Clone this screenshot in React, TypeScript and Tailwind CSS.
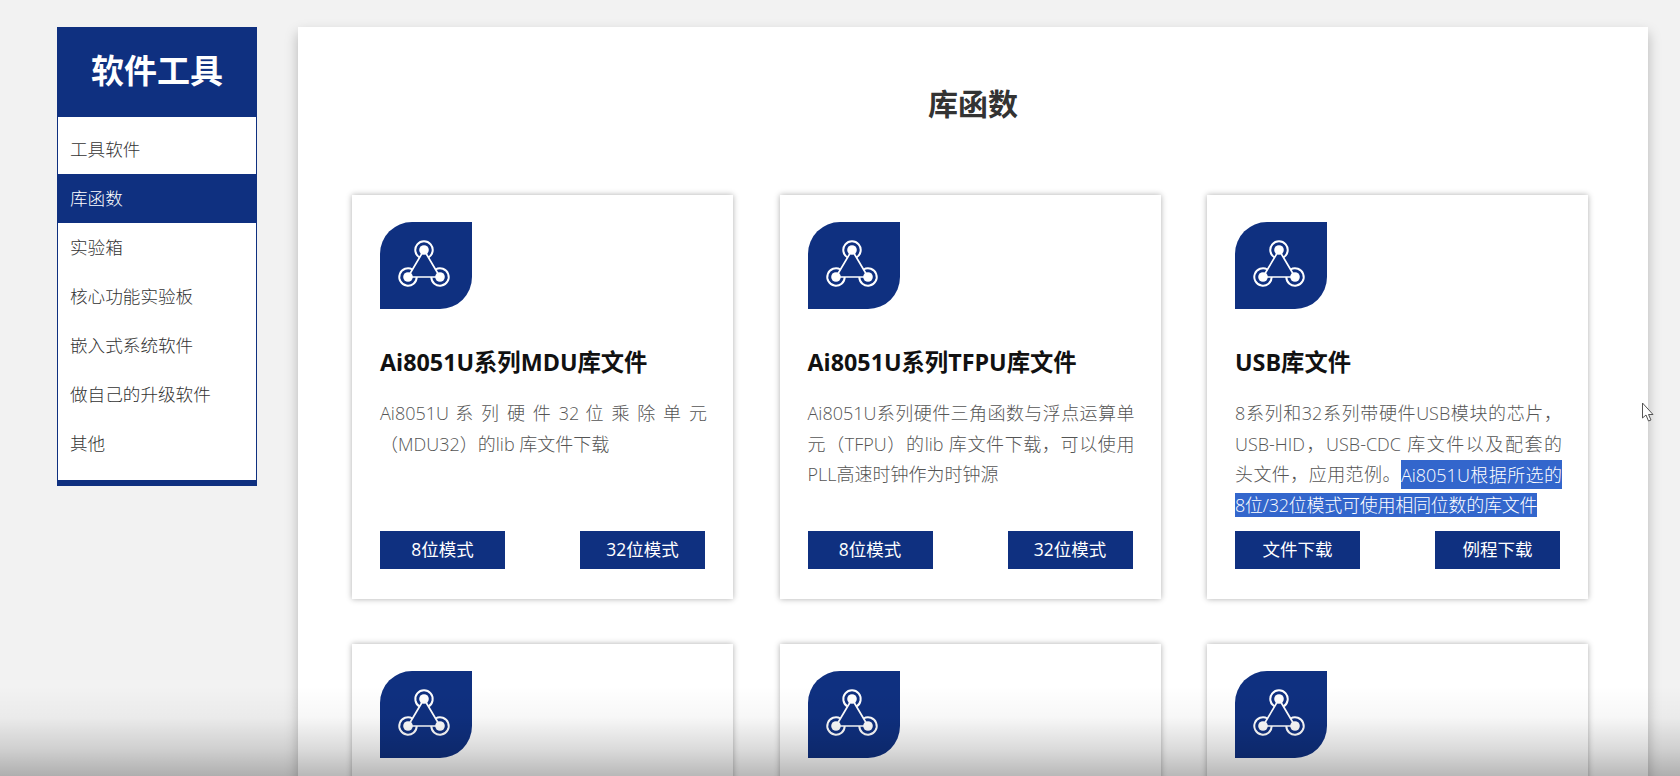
import React from "react";

const navs = ["工具软件", "库函数", "实验箱", "核心功能实验板", "嵌入式系统软件", "做自己的升级软件", "其他"];

function NetIcon() {
  return (
    <div className="w-[92px] h-[87px] bg-[#0f3080] rounded-tl-[32px] rounded-br-[32px] shrink-0">
      <svg width="92" height="87" viewBox="0 0 92 87" fill="none" stroke="#fff">
        <path d="M44 28 L28 55 L60 55 Z" strokeWidth="1.7" strokeLinejoin="round" />
        <path d="M39.6 35.5 A8.7 8.7 0 1 1 48.4 35.5" strokeWidth="2" />
        <path d="M32.4 47.5 A8.7 8.7 0 1 0 36.7 55" strokeWidth="2" />
        <path d="M55.6 47.5 A8.7 8.7 0 1 1 51.3 55" strokeWidth="2" />
        <circle cx="44" cy="28" r="4.8" fill="#fff" stroke="none" />
        <circle cx="28" cy="55" r="4.8" fill="#fff" stroke="none" />
        <circle cx="60" cy="55" r="4.8" fill="#fff" stroke="none" />
      </svg>
    </div>
  );
}

function Btn({ children }: { children: React.ReactNode }) {
  return (
    <div className="w-[125px] h-[38px] bg-[#0f3080] text-white text-[17.5px] leading-[37px] text-center">{children}</div>
  );
}

function Line({ children, last }: { children: React.ReactNode; last?: boolean }) {
  return (
    <div className={last ? "h-[30.5px] leading-[30.5px] whitespace-nowrap" : "h-[30.5px] leading-[30.5px] text-justify [text-align-last:justify]"}>
      {children}
    </div>
  );
}

function Card({
  title,
  lines,
  buttons,
}: {
  title: string;
  lines?: React.ReactNode;
  buttons?: [string, string];
}) {
  return (
    <div className="h-[404px] bg-white shadow-[0_0_6px_rgba(0,0,0,0.32)] pt-[27px] px-[28px] pb-[30px] flex flex-col">
      <NetIcon />
      {title && <h3 className="mt-[37px] text-[23.3px] leading-[32px] font-bold text-[#111] whitespace-nowrap">{title}</h3>}
      {lines && <div className="mt-[20px] -mr-[2px] text-[18px] font-light text-[#555]">{lines}</div>}
      {buttons && (
        <div className="mt-auto flex justify-between w-[325px]">
          <Btn>{buttons[0]}</Btn>
          <Btn>{buttons[1]}</Btn>
        </div>
      )}
    </div>
  );
}

export default function App() {
  return (
    <div className="relative h-[776px] overflow-hidden bg-[#f2f2f2] font-['Open_Sans','Noto_Sans_CJK_SC',sans-serif]">
      <div className="flex items-start pt-[27px] pl-[57px]">
        <aside className="w-[200px] shrink-0 border-x border-b-[6px] border-[#0f3080] bg-white">
          <div className="-mx-px h-[90px] bg-[#0f3080] text-white text-[33px] font-bold leading-[87px] text-center">软件工具</div>
          <ul className="pt-[8px] pb-[12px]">
            {navs.map((n, i) => (
              <li
                key={n}
                className={
                  i === 1
                    ? "h-[49px] leading-[49px] pl-[12px] text-[17.6px] font-light bg-[#0f3080] text-white"
                    : "h-[49px] leading-[49px] pl-[12px] text-[17.6px] font-light text-[#333]"
                }
              >
                {n}
              </li>
            ))}
          </ul>
        </aside>
        <main className="ml-[41px] w-[1350px] shrink-0 h-[900px] bg-white shadow-[0_6px_12px_rgba(0,0,0,0.25)] pl-[54px] pr-[60px]">
          <h2 className="h-[168px] pt-[53px] pl-[6px] text-[30px] leading-[48px] font-bold text-[#333] text-center">库函数</h2>
          <div className="grid grid-cols-3 gap-x-[46.5px] gap-y-[45px]">
            <Card
              title="Ai8051U系列MDU库文件"
              lines={
                <>
                  <Line>Ai8051U 系 列 硬 件 32 位 乘 除 单 元</Line>
                  <Line last>（MDU32）的lib 库文件下载</Line>
                </>
              }
              buttons={["8位模式", "32位模式"]}
            />
            <Card
              title="Ai8051U系列TFPU库文件"
              lines={
                <>
                  <Line>Ai8051U系列硬件三角函数与浮点运算单</Line>
                  <Line>元（TFPU）的lib 库文件下载，可以使用</Line>
                  <Line last>PLL高速时钟作为时钟源</Line>
                </>
              }
              buttons={["8位模式", "32位模式"]}
            />
            <Card
              title="USB库文件"
              lines={
                <>
                  <Line>8系列和32系列带硬件USB模块的芯片，</Line>
                  <Line>USB-HID，USB-CDC 库文件以及配套的</Line>
                  <Line>
                    头文件，应用范例。<span className="bg-[#3366cc] text-white py-[2.5px]">Ai8051U根据所选的</span>
                  </Line>
                  <Line last>
                    <span className="bg-[#3366cc] text-white tracking-[-0.25px]">8位/32位模式可使用相同位数的库文件</span>
                  </Line>
                </>
              }
              buttons={["文件下载", "例程下载"]}
            />
            <Card title="" />
            <Card title="" />
            <Card title="" />
          </div>
        </main>
      </div>
      <svg className="absolute left-[1641px] top-[402px]" width="15" height="21" viewBox="0 0 15 21">
        <path d="M1.5 1 V16 L5 13 L7.5 19 L10 18 L7.5 12.5 H12 Z" fill="#fff" stroke="#555" strokeWidth="1" strokeLinejoin="round" />
      </svg>
      <div className="absolute inset-x-0 bottom-0 h-[90px] pointer-events-none bg-[linear-gradient(to_bottom,rgba(0,0,0,0)_0%,rgba(0,0,0,0.03)_35%,rgba(0,0,0,0.14)_70%,rgba(0,0,0,0.28)_100%)]" />
    </div>
  );
}
